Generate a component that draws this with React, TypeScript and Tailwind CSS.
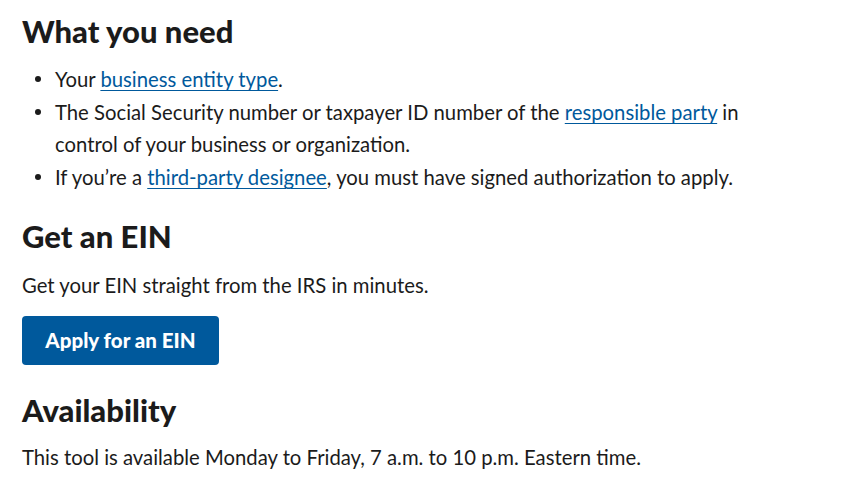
const font = "font-['Lato',_'Source_Sans_Pro',_sans-serif]";
const link = 'text-[#00599c] underline decoration-1 underline-offset-[3px]';

export default function App() {
  return (
    <div className={`${font} bg-white text-[#1b1b1b] pl-[22px] pt-[11px] pb-6 w-[800px]`}>
      <h2 className="text-[31px] font-black leading-[40px]">What you need</h2>
      <ul className="mt-3 text-[20.3px] leading-[32px]">
        <li className="relative pl-[33px]">
          <span className="absolute left-[13px] top-[13px] w-[6px] h-[6px] rounded-full bg-[#1b1b1b]" />
          Your <a href="#" className={link}>business entity type</a>.
        </li>
        <li className="relative pl-[33px] mt-px w-[770px]">
          <span className="absolute left-[13px] top-[13px] w-[6px] h-[6px] rounded-full bg-[#1b1b1b]" />
          The Social Security number or taxpayer ID number of the{' '}
          <a href="#" className={link}>responsible party</a> in control of your business or organization.
        </li>
        <li className="relative pl-[33px] mt-px">
          <span className="absolute left-[13px] top-[13px] w-[6px] h-[6px] rounded-full bg-[#1b1b1b]" />
          If you’re a <a href="#" className={link}>third-party designee</a>, you must have signed authorization to apply.
        </li>
      </ul>

      <h2 className="mt-[23px] text-[31px] font-black leading-[40px]">Get an EIN</h2>
      <p className="mt-[13px] text-[20.3px] leading-[32px]">Get your EIN straight from the IRS in minutes.</p>
      <button className="mt-[15px] w-[197px] h-[49px] rounded-[4px] bg-[#00599c] text-white text-[20.5px] font-black flex items-center justify-center">
        Apply for an EIN
      </button>

      <h2 className="mt-[25px] text-[31px] font-black leading-[40px]">Availability</h2>
      <p className="mt-[11px] text-[20.3px] leading-[32px]">
        This tool is available Monday to Friday, 7 a.m. to 10 p.m. Eastern time.
      </p>
    </div>
  );
}
